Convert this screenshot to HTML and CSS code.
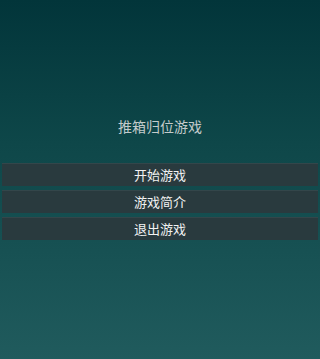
FILE: index.html
```html
<!DOCTYPE html>
<html lang="zh">
<head>
<meta charset="utf-8">
<meta name="viewport" content="width=device-width, initial-scale=1">
<title>推箱归位游戏</title>
<link rel="stylesheet" href="styles.css">
</head>
<body>
<main class="screen">
  <h1 class="title">推箱归位游戏</h1>
  <nav class="menu">
    <button class="menu-btn">开始游戏</button>
    <button class="menu-btn">游戏简介</button>
    <button class="menu-btn">退出游戏</button>
  </nav>
</main>
</body>
</html>
```
FILE: styles.css
```css
html, body {
  margin: 0;
  padding: 0;
  height: 100%;
  overflow: hidden;
}
body {
  background: linear-gradient(to bottom, #02353a 0%, #0e4749 40%, #205b5d 100%);
  font-family: "Noto Sans CJK SC", "Noto Sans", sans-serif;
}
.screen {
  display: flex;
  flex-direction: column;
  padding-top: 118px;
}
.title {
  margin: 0;
  font-size: 14px;
  line-height: 16px;
  font-weight: normal;
  color: #c3cbcb;
  text-align: center;
}
.menu {
  display: flex;
  flex-direction: column;
  gap: 4px;
  margin: 29px 2px 0 2px;
}
.menu-btn {
  height: 23px;
  padding: 0;
  border: none;
  border-top: 1px solid #33464a;
  background: #293a3e;
  color: #f2f2f2;
  font-family: "Noto Sans CJK SC", "Noto Sans", sans-serif;
  font-size: 13px;
  line-height: 22px;
  text-align: center;
}
```
